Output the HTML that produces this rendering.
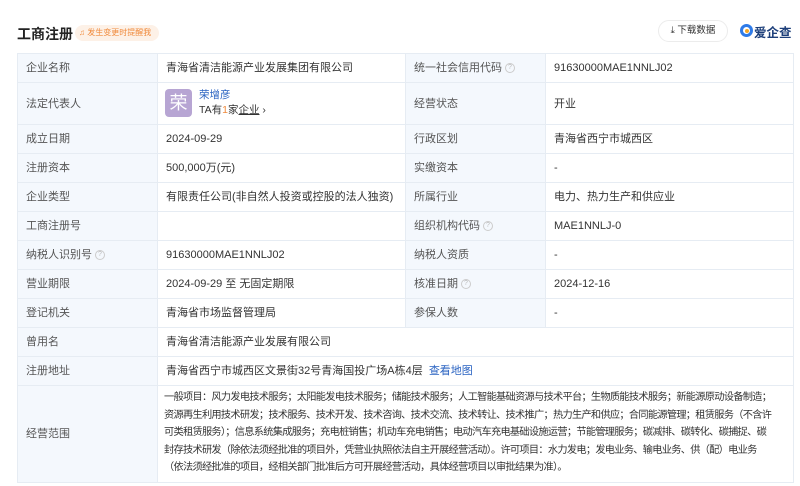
<!DOCTYPE html>
<html><head><meta charset="utf-8"><style>
*{margin:0;padding:0;box-sizing:border-box}
body{width:800px;height:486px;background:#fff;font-family:"Liberation Sans","Noto Sans CJK SC",sans-serif;color:#333;font-size:11px;position:relative;overflow:hidden}
.t{position:absolute;left:17px;top:53px;width:776px;border-collapse:collapse;table-layout:fixed}
.t td{border:1px solid #e6ecf3;padding:0 0 0 8px;height:29px;line-height:12px;vertical-align:middle;font-size:11px;white-space:nowrap;overflow:hidden}
.t td.l{background:#f4f8fd;color:#555}
.q{display:inline-block;width:10px;height:10px;border:1px solid #ccc;border-radius:50%;font-size:7px;color:#bbb;text-align:center;line-height:8px;vertical-align:middle;margin-left:3px}
.blue{color:#2a63c2}
.sc div{white-space:nowrap;height:17.5px;line-height:17.5px}
</style></head><body>
<div style="position:absolute;left:17px;top:24px;font-size:14px;font-weight:bold;color:#222">工商注册</div>
<div style="position:absolute;left:75px;top:25px;width:84px;height:16px;background:#fdf1e7;border-radius:8px;color:#f08a3c;font-size:8px;line-height:16px;padding-left:4px;white-space:nowrap;overflow:hidden">♫ 发生变更时提醒我</div>
<div style="position:absolute;left:658px;top:20px;width:70px;height:22px;border:1px solid #ececec;border-radius:11px;font-size:9.5px;line-height:20px;text-align:center;color:#333">⤓ 下载数据</div>
<div style="position:absolute;left:740px;top:24px;width:13px;height:13px;border-radius:50%;border:3px solid #2f7be8;background:#fff"><div style="position:absolute;left:2px;top:2px;width:4px;height:4px;border-radius:50%;background:#f5a623"></div></div>
<div style="position:absolute;left:754px;top:22px;font-size:12.5px;font-weight:bold;color:#1d3f7a">爱企查</div>
<table class="t">
<colgroup><col style="width:140px"><col style="width:248px"><col style="width:140px"><col style="width:248px"></colgroup>
<tr><td class="l">企业名称</td><td>青海省清洁能源产业发展集团有限公司</td><td class="l">统一社会信用代码<span class="q">?</span></td><td>91630000MAE1NNLJ02</td></tr>
<tr><td class="l" style="height:42px">法定代表人</td><td style="position:relative"><div style="position:absolute;left:7px;top:6px;width:27px;height:28px;background:#b7a5d3;border-radius:4px;color:#fff;font-size:18px;text-align:center;line-height:28px">荣</div><div style="position:absolute;left:41px;top:6px;color:#2a63c2;font-size:10.5px">荣增彦</div><div style="position:absolute;left:41px;top:21px;font-size:10.5px">TA有<span style="color:#f08a3c">1</span>家<u>企业</u> ›</div></td><td class="l">经营状态</td><td>开业</td></tr>
<tr><td class="l">成立日期</td><td>2024-09-29</td><td class="l">行政区划</td><td>青海省西宁市城西区</td></tr>
<tr><td class="l">注册资本</td><td>500,000万(元)</td><td class="l">实缴资本</td><td>-</td></tr>
<tr><td class="l">企业类型</td><td>有限责任公司(非自然人投资或控股的法人独资)</td><td class="l">所属行业</td><td>电力、热力生产和供应业</td></tr>
<tr><td class="l">工商注册号</td><td></td><td class="l">组织机构代码<span class="q">?</span></td><td>MAE1NNLJ-0</td></tr>
<tr><td class="l">纳税人识别号<span class="q">?</span></td><td>91630000MAE1NNLJ02</td><td class="l">纳税人资质</td><td>-</td></tr>
<tr><td class="l">营业期限</td><td>2024-09-29 至 无固定期限</td><td class="l">核准日期<span class="q">?</span></td><td>2024-12-16</td></tr>
<tr><td class="l">登记机关</td><td>青海省市场监督管理局</td><td class="l">参保人数</td><td>-</td></tr>
<tr><td class="l">曾用名</td><td colspan="3">青海省清洁能源产业发展有限公司</td></tr>
<tr><td class="l">注册地址</td><td colspan="3">青海省西宁市城西区文景街32号青海国投广场A栋4层 &nbsp;<span class="blue">查看地图</span></td></tr>
<tr><td class="l" style="height:96px">经营范围</td><td colspan="3" class="sc" style="font-size:10.2px;padding:3px 0 5px 6px;letter-spacing:-0.7px"><div>一般项目：风力发电技术服务；太阳能发电技术服务；储能技术服务；人工智能基础资源与技术平台；生物质能技术服务；新能源原动设备制造；</div><div>资源再生利用技术研发；技术服务、技术开发、技术咨询、技术交流、技术转让、技术推广；热力生产和供应；合同能源管理；租赁服务（不含许</div><div>可类租赁服务）；信息系统集成服务；充电桩销售；机动车充电销售；电动汽车充电基础设施运营；节能管理服务；碳减排、碳转化、碳捕捉、碳</div><div>封存技术研发（除依法须经批准的项目外，凭营业执照依法自主开展经营活动）。许可项目：水力发电；发电业务、输电业务、供（配）电业务</div><div>（依法须经批准的项目，经相关部门批准后方可开展经营活动，具体经营项目以审批结果为准）。</div></td></tr>
</table>
</body></html>
